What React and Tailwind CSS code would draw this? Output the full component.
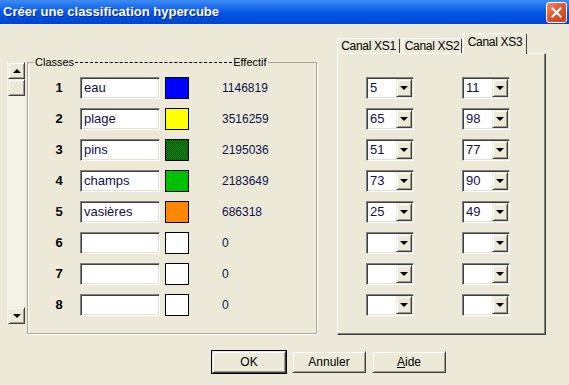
import React from 'react';

const rows = [
  { n: 1, name: 'eau', swatch: 'bg-[#0000ff]', eff: '1146819', a: '5', b: '11' },
  { n: 2, name: 'plage', swatch: 'bg-[#ffff00]', eff: '3516259', a: '65', b: '98' },
  { n: 3, name: 'pins', swatch: 'bg-[repeating-conic-gradient(#003a00_0_25%,#00a000_0_50%)] bg-[length:2px_2px]', eff: '2195036', a: '51', b: '77' },
  { n: 4, name: 'champs', swatch: 'bg-[#00c000]', eff: '2183649', a: '73', b: '90' },
  { n: 5, name: 'vasières', swatch: 'bg-[#ff8800]', eff: '686318', a: '25', b: '49' },
  { n: 6, name: '', swatch: 'bg-white', eff: '0', a: '', b: '' },
  { n: 7, name: '', swatch: 'bg-white', eff: '0', a: '', b: '' },
  { n: 8, name: '', swatch: 'bg-white', eff: '0', a: '', b: '' },
];

const sunken =
  'border border-t-[#808080] border-l-[#808080] border-b-white border-r-white shadow-[inset_1px_1px_0_#404040,inset_-1px_-1px_0_#e4e1d4]';
const raised =
  'border border-t-[#ece9d8] border-l-[#ece9d8] border-b-[#404040] border-r-[#404040] shadow-[inset_1px_1px_0_white,inset_-1px_-1px_0_#9d9a8b]';

const Down = () => <span className="h-0 w-0 border-x-4 border-t-4 border-x-transparent border-t-black" />;
const Up = () => <span className="h-0 w-0 border-x-4 border-b-4 border-x-transparent border-b-black" />;

function Combo({ value }) {
  return (
    <div className={`flex h-[22px] w-[48px] bg-white p-px ${sunken}`}>
      <span className="flex-1 pl-[2px] text-[13px] leading-[18px] text-[#10104a]">{value}</span>
      <span className={`flex w-[16px] items-center justify-center bg-[#ece9d8] ${raised}`}>
        <Down />
      </span>
    </div>
  );
}

function Button({ children, main }) {
  return (
    <div className={main ? 'border border-black' : 'border border-transparent'}>
      <div className={`flex h-[22px] w-[74px] items-center justify-center bg-[#ece9d8] text-[12px] ${raised}`}>
        {children}
      </div>
    </div>
  );
}

export default function App() {
  return (
    <div className="h-[385px] w-[569px] overflow-hidden bg-[#ece9d8] font-['Liberation_Sans',Arial,sans-serif] text-black">
      {/* title bar */}
      <div className="flex h-[24px] items-center justify-between bg-gradient-to-b from-[#3d8cf5] via-[#0458e6] to-[#0045d0] pl-[3px] pr-[2px]">
        <span className="text-[13px] font-bold text-white [text-shadow:1px_1px_#0c2a9a]">
          Créer une classification hypercube
        </span>
        <span className="flex h-[21px] w-[21px] items-center justify-center rounded-[3px] border border-white bg-gradient-to-br from-[#f08a6a] via-[#e0532a] to-[#c6401c]">
          <svg width="11" height="11" viewBox="0 0 11 11">
            <path d="M1.5 1.5 L9.5 9.5 M9.5 1.5 L1.5 9.5" stroke="white" strokeWidth="2.2" strokeLinecap="square" />
          </svg>
        </span>
      </div>

      <div className="flex items-start pl-[7px] pt-[9px]">
        {/* scrollbar */}
        <div className="mt-[29px] flex h-[262px] w-[18px] flex-col justify-between bg-[#f4f2ea] pl-px">
          <div>
            <div className={`flex h-[17px] w-[17px] items-center justify-center bg-[#ece9d8] ${raised}`}>
              <Up />
            </div>
            <div className={`h-[17px] w-[17px] bg-[#ece9d8] ${raised}`} />
          </div>
          <div className={`flex h-[17px] w-[17px] items-center justify-center bg-[#ece9d8] ${raised}`}>
            <Down />
          </div>
        </div>

        {/* group box */}
        <div className="ml-[2px] mt-[29px] flex w-[290px] flex-col">
          <div className="flex h-px items-center text-[11px]">
            <span className="h-px w-[7px] bg-[#aca899]" />
            <span className="px-px">Classes</span>
            <span className="w-[157px] border-t border-dashed border-black" />
            <span className="px-px">Effectif</span>
            <span className="h-px flex-1 bg-[#aca899]" />
          </div>
          <div className="flex h-[271px] flex-col gap-[9px] border-x border-b border-[#aca899] pt-[14px] shadow-[1px_1px_0_white,inset_1px_0_0_white]">
            {rows.map((r) => (
              <div key={r.n} className="flex h-[22px] items-center">
                <span className="ml-[25px] w-[12px] text-center text-[13px] font-bold">{r.n}</span>
                <div className={`ml-[15px] h-[22px] w-[80px] bg-white p-px ${sunken}`}>
                  <span className="block pl-[2px] text-[13px] leading-[18px] text-[#10104a]">{r.name}</span>
                </div>
                <span className={`ml-[5px] h-[22px] w-[24px] border border-black ${r.swatch}`} />
                <span className="ml-[33px] text-[12px] text-[#10104a]">{r.eff}</span>
              </div>
            ))}
          </div>
        </div>

        {/* tabs */}
        <div className="ml-[20px] flex w-[209px] flex-col">
          <div className="relative z-10 flex h-[20px] items-end text-[12px] tracking-[-0.3px]">
            <div className="flex h-[15px] w-[63px] items-start justify-center rounded-t-[2px] border-l border-t border-r border-l-white border-t-white border-r-[#404040] leading-[14px]">
              Canal XS1
            </div>
            <div className="ml-[2px] flex h-[15px] w-[60px] items-start justify-center rounded-t-[2px] border-l border-t border-r border-l-white border-t-white border-r-[#404040] leading-[14px]">
              Canal XS2
            </div>
            <div className="-mb-px ml-px flex h-[21px] w-[64px] items-start justify-center rounded-t-[2px] border-l border-t border-r border-l-white border-t-white border-r-[#404040] bg-[#ece9d8] pt-[1px] leading-[14px]">
              Canal XS3
            </div>
          </div>
          <div className="h-[282px] border border-l-white border-t-white border-r-[#404040] border-b-[#404040] pl-[28px] pt-[23px] shadow-[inset_-1px_-1px_0_#808080]">
            <div className="flex gap-[48px]">
              <div className="flex flex-col gap-[9px]">
                {rows.map((r) => (
                  <Combo key={r.n} value={r.a} />
                ))}
              </div>
              <div className="flex flex-col gap-[9px]">
                {rows.map((r) => (
                  <Combo key={r.n} value={r.b} />
                ))}
              </div>
            </div>
          </div>
        </div>
      </div>

      <div className="mt-[15px] flex gap-[4px] pl-[211px]">
        <Button main>OK</Button>
        <Button>Annuler</Button>
        <Button>
          <span className="underline">A</span>ide
        </Button>
      </div>
    </div>
  );
}
